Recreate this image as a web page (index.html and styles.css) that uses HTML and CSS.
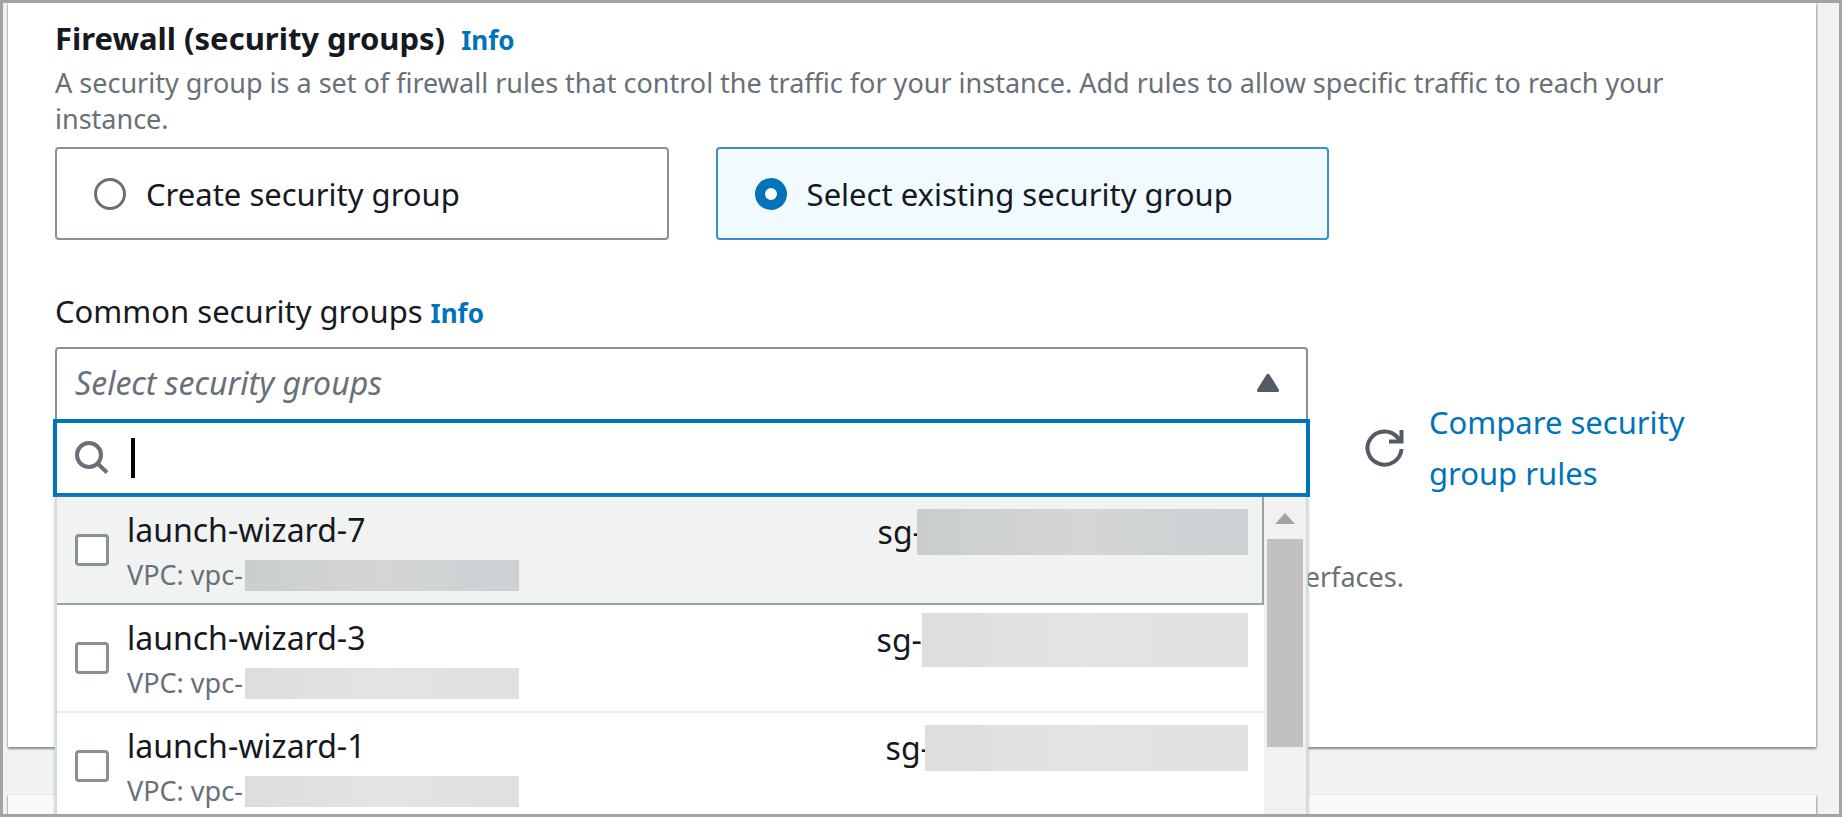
FILE: index.html
```html
<!DOCTYPE html>
<html lang="en">
<head>
	<meta charset="utf-8">
	<title>Launch an instance</title>
	<link rel="stylesheet" href="styles.css">
</head>
<body>
<div class="frame">
	<main class="card">
		<div class="heading">
			<h2>Firewall (security groups)</h2>
			<a class="info" href="#">Info</a>
		</div>
		<p class="description">A security group is a set of firewall rules that control the traffic for your instance. Add rules to allow specific traffic to reach your instance.</p>

		<div class="tiles">
			<label class="tile"><input type="radio" name="firewall">Create security group</label>
			<label class="tile selected"><input type="radio" name="firewall" checked>Select existing security group</label>
		</div>

		<div class="field-label">
			<label for="groups">Common security groups</label>
			<a class="info" href="#">Info</a>
		</div>
		<div class="group-row">
			<div class="multiselect">
				<select id="groups" class="trigger">
					<option>Select security groups</option>
				</select>
				<svg class="arrow" viewBox="0 0 24 20"><path d="M10.6 1.4 1.2 16.6Q.4 19 2.6 19H21.4Q23.6 19 22.8 16.6L13.4 1.4Q12 0 10.6 1.4Z"/></svg>

				<div class="dropdown">
					<div class="search">
						<svg viewBox="0 0 34 34"><circle cx="14" cy="14" r="12"/><path d="M22.500 22.500 32 31.500"/></svg>
						<span class="caret"></span>
						<input type="text" aria-label="Search security groups">
					</div>
					<div class="list">
						<div class="options">
							<label class="option active">
								<input type="checkbox">
								<span class="name">launch-wizard-7<small>VPC: vpc-<i class="mask dark"></i></small></span>
								<span class="sg">sg-<i class="mask dark over"></i></span>
							</label>
							<label class="option">
								<input type="checkbox">
								<span class="name">launch-wizard-3<small>VPC: vpc-<i class="mask"></i></small></span>
								<span class="sg">sg-<i class="mask tall"></i></span>
							</label>
							<label class="option">
								<input type="checkbox">
								<span class="name">launch-wizard-1<small>VPC: vpc-<i class="mask"></i></small></span>
								<span class="sg">sg-<i class="mask over short"></i></span>
							</label>
						</div>
						<div class="scrollbar">
							<svg viewBox="0 0 20 11"><path d="M0 11 10 0 20 11Z"/></svg>
							<div class="thumb"></div>
						</div>
					</div>
				</div>
			</div>
			<div class="actions">
				<button class="refresh" type="button" aria-label="Refresh">
					<svg viewBox="0 0 40 38"><path d="M36.500 20A17 16.500 0 1 1 33 9L36 12"/><path d="M36.500 1V12.500H24"/></svg>
				</button>
				<a class="compare" href="#">Compare security group rules</a>
			</div>
		</div>
		<p class="hint">erfaces.</p>
	</main>
	<section class="card next"></section>
</div>
</body>
</html>
```
FILE: styles.css
```css
* { box-sizing: border-box; }
body {
	margin: 0;
	color: #16191f;
	font: 31px/36px "Noto Sans", sans-serif;
}
.frame {
	height: 100vh;
	overflow: hidden;
	border: 3px solid #a3a3a3;
	background: #f1f3f3;
}
a { color: #0073bb; text-decoration: none; }
h2, p { margin: 0; }

/* container cards */
.card {
	margin: 0 23px 48px 5px;
	padding: 17px 47px 152px;
	background: #fff;
	box-shadow: 0 2px 2px #879196, 1px 1px 2px #aab7b8, -1px 0 1px #d5dbdb;
}
.next { height: 60px; padding: 0; background: #fafafa; }

.heading { display: flex; align-items: baseline; gap: 16px; }
h2 { font-size: 31px; line-height: 36px; }
.info { font-size: 26px; font-weight: bold; }
.description { padding-top: 7px; color: #687078; font-size: 27px; }

/* radio tiles */
.tiles { display: flex; gap: 47px; margin-top: 10px; }
.tile {
	display: flex;
	align-items: center;
	gap: 20px;
	width: 35.8%;
	height: 93px;
	padding: 0 37px;
	border: 2px solid #879196;
	border-radius: 4px;
}
.tile.selected { border-color: #3a8fc8; background: #f1faff; }
.tile input {
	appearance: none;
	width: 32px;
	height: 32px;
	margin: 0;
	border: 3px solid #687078;
	border-radius: 50%;
	background: #fff;
}
.tile input:checked { border: 10px solid #0073bb; }

.field-label { display: flex; align-items: baseline; gap: 8px; margin: 53px 0 16px; }

/* select with its open menu */
.group-row { display: flex; align-items: flex-start; gap: 57px; }
.multiselect { position: relative; width: 73.1%; }
.trigger {
	display: block;
	appearance: none;
	width: 100%;
	height: 74px;
	padding: 0 18px 4px;
	border: 2px solid #879196;
	border-radius: 4px 4px 0 0;
	background: #fff;
	color: #687078;
	font: italic 32px "Noto Sans", sans-serif;
}
.arrow { position: absolute; top: 26px; right: 28px; width: 24px; height: 20px; fill: #545b64; }
.dropdown { position: absolute; top: 72px; left: 0; right: 0; z-index: 1; }
.search {
	display: flex;
	align-items: center;
	height: 78px;
	margin: 0 -2px;
	padding: 0 18px;
	border: 4px solid #0073bb;
	background: #fff;
}
.search svg { width: 34px; height: 34px; fill: none; stroke: #687078; stroke-width: 4; }
.caret { width: 4px; height: 40px; margin-left: 22px; background: #000; }
.search input { flex: 1; border: 0; outline: 0; font: inherit; caret-color: transparent; }
.list { display: flex; background: #fff; border: solid #d5dbdb; border-width: 0 2px; box-shadow: 0 1px 3px #aab7b8; }
.options { flex: 1; font-size: 32px; }
.option {
	display: flex;
	align-items: center;
	height: 108px;
	padding: 0 16px 0 18px;
	border-bottom: 2px solid #eaeded;
}
.option.active { padding-right: 14px; border: solid #95a5a6; border-width: 0 2px 2px 0; background: #f1f3f3; }
.option input {
	appearance: none;
	width: 34px;
	height: 32px;
	margin: 0 18px 0 0;
	border: 3px solid #879196;
	border-radius: 4px;
	background: #fff;
}
.name { flex: 1; padding-top: 5px; }
.name small { display: flex; align-items: center; gap: 2px; margin-top: 9px; color: #687078; font-size: 27px; line-height: 36px; }
.mask { width: 274px; height: 31px; background: linear-gradient(90deg, #dcddde, #e3e4e5 50%, #dfe0e1); }
.mask.dark { background: linear-gradient(90deg, #cbcecf, #d3d5d6 50%, #cdd1d3); }
.sg { display: flex; align-items: center; height: 48px; margin-bottom: 36px; }
.sg .mask { width: 326px; height: 46px; }
.sg .tall { height: 54px; }
.sg .over { margin-left: -6px; width: 331px; }
.sg .short { width: 323px; }
.scrollbar { width: 42px; padding: 16px 3px; background: #f1f1f1; }
.scrollbar svg { display: block; width: 20px; height: 11px; margin: 0 auto 15px; fill: #a3a3a3; }
.thumb { height: 208px; background: #c1c1c1; }

.actions { display: flex; flex: 1; align-items: center; gap: 24px; padding-top: 50px; }
.refresh { flex: none; width: 40px; height: 38px; padding: 0; border: 0; background: none; }
.refresh svg { display: block; fill: none; stroke: #545b64; stroke-width: 4; }
.compare { max-width: 300px; line-height: 51px; }
.hint { width: 78.7%; margin-top: 60px; color: #687078; font-size: 27px; text-align: right; }
```
